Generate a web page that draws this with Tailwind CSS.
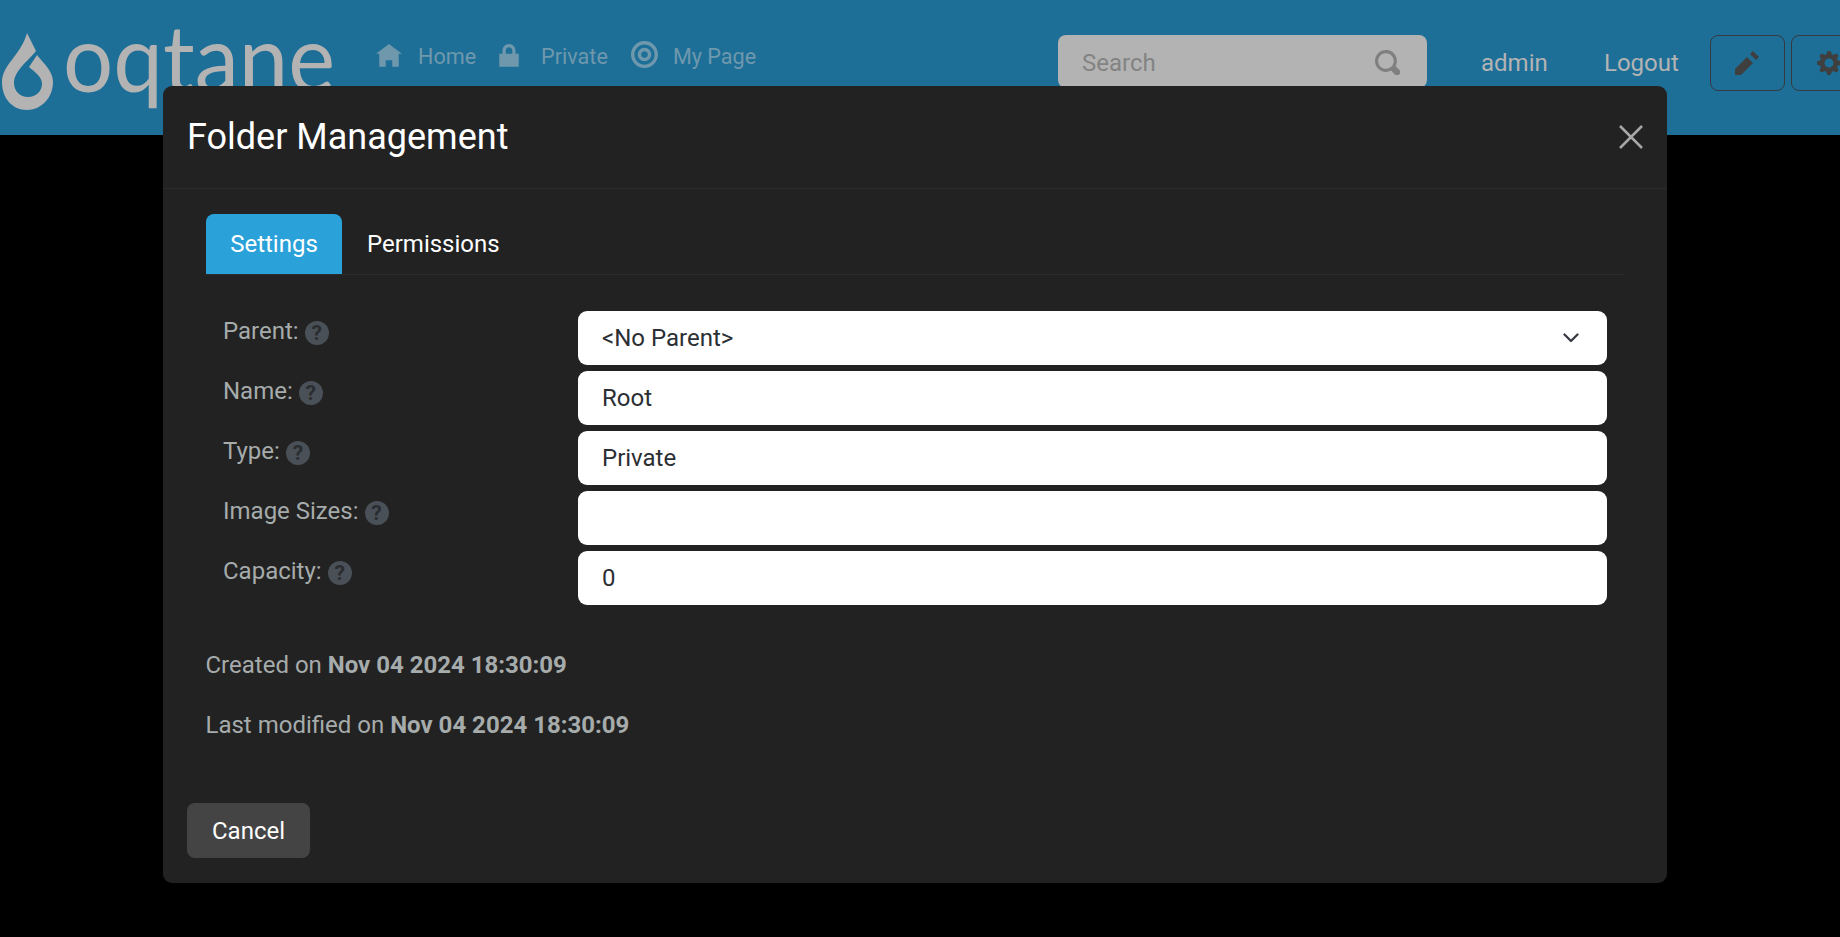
<!DOCTYPE html>
<html lang="en">
<head>
    <meta charset="UTF-8">
    <meta name="viewport" content="width=device-width, initial-scale=1.0">
    <title>Folder Management</title>
    <script src="https://cdn.jsdelivr.net/npm/@tailwindcss/browser@4"></script>
</head>
<body class="bg-black font-[Roboto,sans-serif] text-[24px] leading-[36px] overflow-hidden">
<div class="relative w-[1840px] h-[937px] overflow-hidden">
    <!-- top bar, colours already dimmed by the modal backdrop -->
    <header class="h-[135px] bg-[#1d6f98] flex items-start">
        <svg class="mt-[28px] w-[60px] h-[85px] shrink-0" viewBox="0 0 60 85">
            <path fill="#b3b3b3" d="M27 5L36 23C28 33 14 43 14 55C14 63 20 69 28 69C36 69 42 63 42 56C42 49 35 44 29 39L37 27C44 36 53 43 53 54C53 70 41 82 27 82C12 82 2 70 2 54C2 37 21 27 27 5Z"/>
        </svg>
        <svg class="ml-[3px] mt-[25px] w-[274px] h-[85px] shrink-0" viewBox="0 0 274 85">
            <text x="0" y="67" textLength="272" lengthAdjust="spacingAndGlyphs" fill="#b3b3b3" font-family="Lato" font-weight="400" font-size="93">oqtane</text>
        </svg>
        <nav class="flex items-start text-[#6f98ad] text-[21.600px] leading-[34px] mt-[40px] ml-[39px]">
            <svg class="w-[26px] h-[26px] mt-[4px] fill-current" viewBox="0 0 8 8"><path d="M4 0l-4 3h1v4h2v-2h2v2h2v-4.030l1 .03-4-3z"/></svg>
            <span class="ml-[16px]">Home</span>
            <svg class="w-[26px] h-[26px] ml-[20px] mt-[4px] fill-current" viewBox="0 0 8 8"><path transform="translate(1)" d="M3 0c-1.100 0-2 .9-2 2v1h-1v4h6v-4h-1v-1c0-1.100-.9-2-2-2zm0 1c.56 0 1 .44 1 1v1h-2v-1c0-.56.44-1 1-1z"/></svg>
            <span class="ml-[19px]">Private</span>
            <svg class="w-[27px] h-[27px] ml-[23px] mt-[1px] fill-current" viewBox="0 0 8 8"><path d="M4 0c-2.200 0-4 1.800-4 4s1.800 4 4 4 4-1.800 4-4-1.800-4-4-4zm0 1c1.660 0 3 1.340 3 3s-1.340 3-3 3-3-1.340-3-3 1.340-3 3-3zm0 1c-1.100 0-2 .9-2 2s.9 2 2 2 2-.9 2-2-.9-2-2-2zm0 1c.56 0 1 .44 1 1s-.44 1-1 1-1-.44-1-1 .44-1 1-1z"/></svg>
            <span class="ml-[15px]">My Page</span>
        </nav>
        <div class="absolute left-[1058px] top-[35px] w-[369px] h-[53px] rounded-[8px] bg-[#b3b3b3] flex items-center pl-[24px] pr-[27px] justify-between text-[#838383]">
            <span class="mt-[2px]">Search</span>
            <svg class="w-[25px] h-[25px] mt-[2px] fill-[#7f7f7f]" viewBox="0 0 8 8"><path d="M3.500 0c-1.930 0-3.500 1.570-3.500 3.500s1.570 3.500 3.500 3.500c.59 0 1.170-.14 1.660-.41a1 1 0 0 0 .13.13l1 1a1.020 1.020 0 1 0 1.440-1.440l-1-1a1 1 0 0 0-.16-.13c.27-.49.44-1.060.44-1.660 0-1.930-1.570-3.500-3.500-3.500zm0 1c1.390 0 2.500 1.110 2.500 2.500 0 .66-.24 1.270-.66 1.720-.01.01-.02.02-.03.03a1 1 0 0 0-.13.13c-.44.4-1.040.63-1.690.63-1.390 0-2.500-1.110-2.500-2.500s1.110-2.500 2.500-2.500z"/></svg>
        </div>
        <span class="absolute left-[1481px] top-[45px] text-[#b3b3b3]">admin</span>
        <span class="absolute left-[1604px] top-[45px] text-[#b3b3b3]">Logout</span>
        <div class="absolute left-[1710px] top-[35px] w-[75px] h-[56px] rounded-[8px] border border-[#343a40] flex items-center justify-center">
            <svg class="w-[24px] h-[24px] -ml-[1px] fill-[#3f3f3f]" viewBox="0 0 8 8"><path d="M6 0l-1 1 2 2 1-1-2-2zm-2 2l-4 4v2h2l4-4-2-2z"/></svg>
        </div>
        <div class="absolute left-[1791px] top-[35px] w-[75px] h-[56px] rounded-[8px] border border-[#343a40] flex items-center justify-center">
            <svg class="w-[24px] h-[24px] fill-[#3f3f3f]" viewBox="0 0 8 8"><path d="M3.500 0l-.5 1.190c-.1.03-.19.08-.28.13l-1.190-.5-.72.72.5 1.190c-.05.1-.09.18-.13.28l-1.190.5v1l1.190.5c.04.1.08.18.13.28l-.5 1.190.72.72 1.190-.5c.09.04.18.09.28.13l.5 1.190h1l.5-1.190c.09-.04.19-.08.28-.13l1.190.5.72-.72-.5-1.190c.04-.09.09-.19.13-.28l1.190-.5v-1l-1.190-.5c-.03-.09-.08-.19-.13-.28l.5-1.190-.72-.72-1.190.5c-.09-.04-.19-.09-.28-.13l-.5-1.190h-1zm.5 2.500c.83 0 1.500.67 1.500 1.500s-.67 1.500-1.500 1.500-1.500-.67-1.500-1.500.67-1.500 1.500-1.500z"/></svg>
        </div>
    </header>

    <!-- modal -->
    <div class="absolute left-[163px] top-[86px] w-[1504px] h-[797px] rounded-[9px] bg-[#222222] flex flex-col text-[#a6abab]">
        <div class="h-[103px] shrink-0 border-b border-[#2c2c2c] flex items-center justify-between pl-[24px] pr-[24px]">
            <h5 class="text-[36px] leading-[54px] text-white">Folder Management</h5>
            <svg class="w-[24px] h-[24px]" viewBox="0 0 24 24" fill="none" stroke="#a8a8a8" stroke-width="2.500"><path d="M1 1L23 23M23 1L1 23"/></svg>
        </div>
        <div class="flex-1 pt-[25px] pl-[43px] pr-[42px]">
            <div class="flex h-[61px] border-b border-[#2c2c2c] text-white">
                <span class="w-[136px] h-[60px] rounded-t-[8px] bg-[#2aa1d9] flex items-center justify-center">Settings</span>
                <span class="h-[60px] px-[25px] flex items-center justify-center">Permissions</span>
            </div>
            <div class="mt-[36px] flex flex-col gap-[6px] pr-[18px]">
                <div class="flex h-[54px]">
                    <label class="w-[372px] pl-[17px] pt-[2px] flex items-start gap-[6px]">Parent: <i class="mt-[8px] w-[24px] h-[24px] rounded-full bg-[#495057] text-[#2a2d30] not-italic font-bold text-[21px] leading-[24px] text-center">?</i></label>
                    <div class="flex-1 bg-white rounded-[9px] text-[#2b2f33] pl-[24px] pr-[28px] flex items-center justify-between">
                        <span>&lt;No Parent&gt;</span>
                        <svg class="w-[16px] h-[10px]" viewBox="0 0 16 10" fill="none" stroke="#343a40" stroke-width="2.300" stroke-linecap="round" stroke-linejoin="round"><path d="M1.500 1.500L8 8L14.500 1.500"/></svg>
                    </div>
                </div>
                <div class="flex h-[54px]">
                    <label class="w-[372px] pl-[17px] pt-[2px] flex items-start gap-[6px]">Name: <i class="mt-[8px] w-[24px] h-[24px] rounded-full bg-[#495057] text-[#2a2d30] not-italic font-bold text-[21px] leading-[24px] text-center">?</i></label>
                    <div class="flex-1 bg-white rounded-[9px] text-[#2b2f33] pl-[24px] flex items-center">Root</div>
                </div>
                <div class="flex h-[54px]">
                    <label class="w-[372px] pl-[17px] pt-[2px] flex items-start gap-[6px]">Type: <i class="mt-[8px] w-[24px] h-[24px] rounded-full bg-[#495057] text-[#2a2d30] not-italic font-bold text-[21px] leading-[24px] text-center">?</i></label>
                    <div class="flex-1 bg-white rounded-[9px] text-[#2b2f33] pl-[24px] flex items-center">Private</div>
                </div>
                <div class="flex h-[54px]">
                    <label class="w-[372px] pl-[17px] pt-[2px] flex items-start gap-[6px]">Image Sizes: <i class="mt-[8px] w-[24px] h-[24px] rounded-full bg-[#495057] text-[#2a2d30] not-italic font-bold text-[21px] leading-[24px] text-center">?</i></label>
                    <div class="flex-1 bg-white rounded-[9px]"></div>
                </div>
                <div class="flex h-[54px]">
                    <label class="w-[372px] pl-[17px] pt-[2px] flex items-start gap-[6px]">Capacity: <i class="mt-[8px] w-[24px] h-[24px] rounded-full bg-[#495057] text-[#2a2d30] not-italic font-bold text-[21px] leading-[24px] text-center">?</i></label>
                    <div class="flex-1 bg-white rounded-[9px] text-[#2b2f33] pl-[24px] flex items-center">0</div>
                </div>
            </div>
            <p class="mt-[42px] -ml-[0.5px]">Created on <b>Nov 04 2024 18:30:09</b></p>
            <p class="mt-[24px] -ml-[0.5px]">Last modified on <b>Nov 04 2024 18:30:09</b></p>
        </div>
        <div class="pl-[24px] pb-[25px]">
            <button class="w-[123px] h-[55px] rounded-[8px] bg-[#444444] text-white">Cancel</button>
        </div>
    </div>
</div>
</body>
</html>
